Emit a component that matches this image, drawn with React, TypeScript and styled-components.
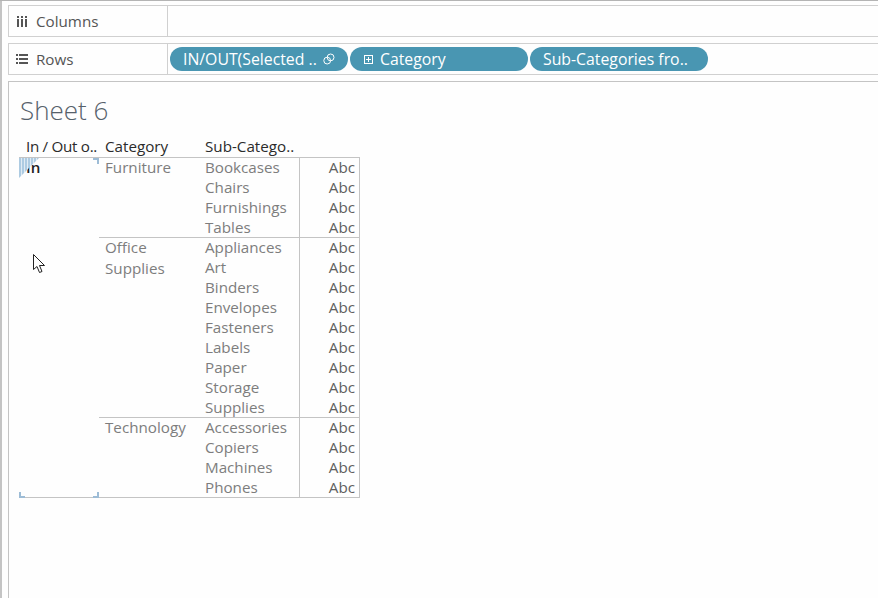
import React from 'react';
import styled, { createGlobalStyle } from 'styled-components';

const GlobalStyle = createGlobalStyle`
  html, body {
    margin: 0;
    padding: 0;
    background: #fefefe;
    overflow: hidden;
  }
`;

const Page = styled.div`
  width: 878px;
  height: 598px;
  box-sizing: border-box;
  border-top: 1px solid #b4b4b4;
  padding: 4px 0 0 8px;
  display: flex;
  flex-direction: column;
  gap: 6px;
  font-family: 'Open Sans', 'Liberation Sans', sans-serif;
  position: relative;
  overflow: hidden;
`;

const LeftEdge = styled.div`
  position: absolute;
  left: 0;
  top: 0;
  bottom: 0;
  width: 2px;
  background: #c4c4c4;
`;

const Shelf = styled.div`
  display: flex;
  height: 32px;
  box-sizing: border-box;
  border: 1px solid #d0d0d0;
  border-right: none;
  flex-shrink: 0;
`;

const ShelfLabel = styled.div`
  width: 159px;
  flex-shrink: 0;
  display: flex;
  align-items: center;
  gap: 8px;
  padding-left: 7px;
  box-sizing: border-box;
  border-right: 1px solid #d0d0d0;
  font-size: 15.2px;
  color: #555;
`;

const ShelfBody = styled.div`
  flex: 1;
  display: flex;
  align-items: center;
  gap: 2px;
  padding-left: 2px;
`;

const Pill = styled.div<{ $width: number }>`
  width: ${p => p.$width}px;
  height: 24px;
  box-sizing: border-box;
  border-radius: 12px;
  background: #4996b2;
  color: #fff;
  font-size: 15.8px;
  display: flex;
  align-items: center;
  gap: 6px;
  padding-left: 13px;
  white-space: nowrap;
`;

const PlusSvg = styled.svg`
  margin: 0 1px;
`;

const Sheet = styled.div`
  flex: 1;
  border-top: 1px solid #c4c4c4;
  border-left: 1px solid #c4c4c4;
  padding: 12px 0 0 10px;
  position: relative;
`;

const Title = styled.div`
  font-size: 26px;
  font-weight: 300;
  line-height: 33px;
  color: #56616b;
  margin-bottom: 9px;
  padding-left: 1px;
`;

const Table = styled.div`
  display: grid;
  grid-template-columns: 80px 100px 100px 61px;
  width: 341px;
  font-size: 15.2px;
`;

const Header = styled.div<{ $tight?: boolean }>`
  height: 22px;
  line-height: 20px;
  padding-left: ${p => (p.$tight ? '7px' : '6px')};
  letter-spacing: ${p => (p.$tight ? '-0.3px' : '0')};
  color: #2b2b2b;
  white-space: nowrap;
  border-bottom: 1px solid #c4c4c4;
  box-sizing: border-box;
`;

const InCell = styled.div`
  grid-row: 2 / span 3;
  position: relative;
  height: 340px;
  font-weight: 600;
  color: #222;
  padding-left: 7px;
  line-height: 18px;
  box-shadow: inset 0 -1px 0 #c4c4c4;
`;

const Group = styled.div<{ $first?: boolean }>`
  grid-column: 2 / span 3;
  display: grid;
  grid-template-columns: 100px 101px 59px;
  border-right: 1px solid #c4c4c4;
  border-top: ${p => (p.$first ? 'none' : '1px solid #c4c4c4')};
  margin-top: ${p => (p.$first ? '0' : '-1px')};
  &:last-child {
    box-shadow: inset 0 -1px 0 #c4c4c4;
  }
`;

const CategoryCell = styled.div`
  padding: 0 6px;
  margin-top: -1px;
  color: #7d7d7d;
  line-height: 21px;
`;

const SubCol = styled.div`
  padding-left: 6px;
  color: #7d7d7d;
  line-height: 20px;
  margin-top: -1px;
  border-right: 1px solid #c4c4c4;
`;

const AbcCol = styled.div`
  text-align: right;
  padding-right: 4px;
  color: #606060;
  line-height: 20px;
  margin-top: -1px;
`;

const Corner = styled.span<{ $at: 'tr' | 'bl' | 'br' }>`
  position: absolute;
  width: 6px;
  height: 6px;
  box-sizing: border-box;
  border: 0 solid #9dbcd6;
  ${p => (p.$at === 'tr' ? 'top: 0; right: 0; border-top-width: 2px; border-right-width: 2px;' : '')}
  ${p => (p.$at === 'bl' ? 'bottom: 0; left: 0; border-bottom-width: 2px; border-left-width: 2px;' : '')}
  ${p => (p.$at === 'br' ? 'bottom: 0; right: 0; border-bottom-width: 2px; border-right-width: 2px;' : '')}
`;

const Hatch = styled.svg`
  position: absolute;
  left: 0;
  top: 0;
`;

const Cursor = styled.svg`
  position: absolute;
  left: 24px;
  top: 172px;
`;

const ColumnsIcon = () => (
  <svg width="12" height="11" viewBox="0 0 12 11" fill="#555">
    <rect x="1" y="3" width="2" height="8" />
    <rect x="1" y="0" width="2" height="2" />
    <rect x="5" y="3" width="2" height="8" />
    <rect x="5" y="0" width="2" height="2" />
    <rect x="9" y="3" width="2" height="8" />
    <rect x="9" y="0" width="2" height="2" />
  </svg>
);

const RowsIcon = () => (
  <svg width="12" height="10" viewBox="0 0 12 10" fill="#555">
    <rect x="0" y="0" width="2" height="2" />
    <rect x="3" y="0" width="9" height="2" />
    <rect x="0" y="4" width="2" height="2" />
    <rect x="3" y="4" width="9" height="2" />
    <rect x="0" y="8" width="2" height="2" />
    <rect x="3" y="8" width="9" height="2" />
  </svg>
);

const LinkIcon = () => (
  <svg width="12" height="12" viewBox="0 0 12 12" fill="none" stroke="#fff" strokeWidth="1">
    <circle cx="4.2" cy="7.6" r="3.4" />
    <circle cx="7.6" cy="4.4" r="3.4" />
  </svg>
);

const PlusBoxIcon = () => (
  <PlusSvg width="9" height="9" viewBox="0 0 9 9" fill="none" stroke="#fff" strokeWidth="1">
    <rect x="0.5" y="0.5" width="8" height="8" />
    <path d="M2 4.5h5M4.5 2v5" />
  </PlusSvg>
);

const groups = [
  { category: 'Furniture', subs: ['Bookcases', 'Chairs', 'Furnishings', 'Tables'] },
  {
    category: 'Office Supplies',
    subs: ['Appliances', 'Art', 'Binders', 'Envelopes', 'Fasteners', 'Labels', 'Paper', 'Storage', 'Supplies'],
  },
  { category: 'Technology', subs: ['Accessories', 'Copiers', 'Machines', 'Phones'] },
];

export default function App() {
  return (
    <>
      <GlobalStyle />
      <Page>
        <LeftEdge />
        <Shelf>
          <ShelfLabel>
            <ColumnsIcon />
            Columns
          </ShelfLabel>
          <ShelfBody />
        </Shelf>
        <Shelf>
          <ShelfLabel>
            <RowsIcon />
            Rows
          </ShelfLabel>
          <ShelfBody>
            <Pill $width={178}>
              IN/OUT(Selected ..
              <LinkIcon />
            </Pill>
            <Pill $width={178}>
              <PlusBoxIcon />
              Category
            </Pill>
            <Pill $width={178}>Sub-Categories fro..</Pill>
          </ShelfBody>
        </Shelf>
        <Sheet>
          <Title>Sheet 6</Title>
          <Table>
            <Header $tight>In / Out o..</Header>
            <Header>Category</Header>
            <Header>Sub-Catego..</Header>
            <Header />
            <InCell>
              In
              <Hatch width="20" height="20" viewBox="0 0 20 20">
                <defs>
                  <pattern id="hatch" width="3" height="3" patternUnits="userSpaceOnUse">
                    <rect width="2" height="3" fill="#adcbe2" />
                    <rect x="2" width="1" height="3" fill="#e0ebf4" />
                  </pattern>
                </defs>
                <polygon points="0,0 20,0 0,20" fill="url(#hatch)" />
              </Hatch>
              <Corner $at="tr" />
              <Corner $at="bl" />
              <Corner $at="br" />
            </InCell>
            {groups.map((g, i) => (
              <Group key={g.category} $first={i === 0}>
                <CategoryCell>{g.category}</CategoryCell>
                <SubCol>
                  {g.subs.map(s => (
                    <div key={s}>{s}</div>
                  ))}
                </SubCol>
                <AbcCol>
                  {g.subs.map(s => (
                    <div key={s}>Abc</div>
                  ))}
                </AbcCol>
              </Group>
            ))}
          </Table>
          <Cursor width="14" height="21" viewBox="0 0 14 21">
            <path d="M0.5 0.5V15.5L4 12.5L6.5 18.5L9 17.5L6.5 11.5H11.5Z" fill="#fff" stroke="#222" strokeWidth="1" />
          </Cursor>
        </Sheet>
      </Page>
    </>
  );
}
